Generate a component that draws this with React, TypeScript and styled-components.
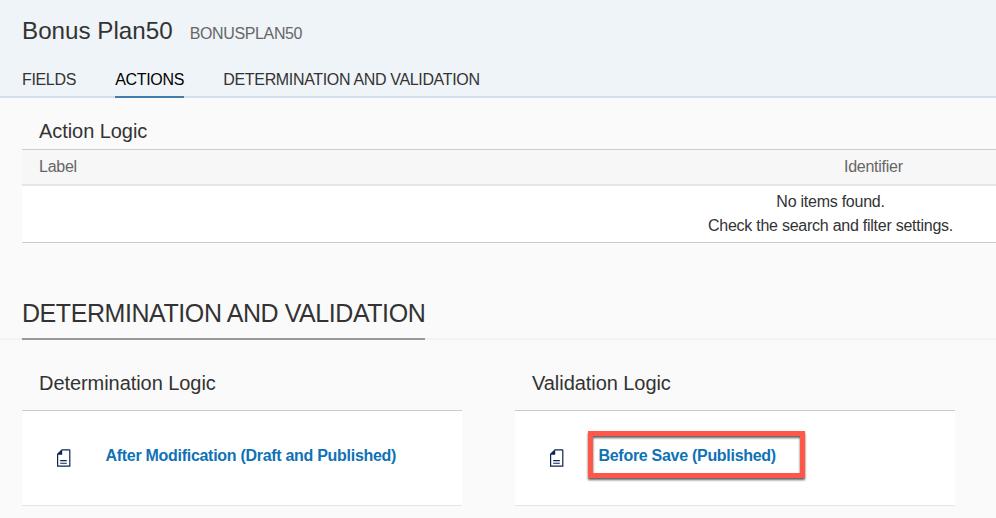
import React from 'react';
import styled, { createGlobalStyle } from 'styled-components';

const GlobalStyle = createGlobalStyle`
  * { box-sizing: border-box; }
  html, body { margin: 0; padding: 0; background: #fafafa; overflow: hidden; }
  body { font-family: "Liberation Sans", Arial, Helvetica, sans-serif; color: #333; }
`;
const Page = styled.div`width: 996px; height: 518px; overflow: hidden; background: #fafafa;`;
const Header = styled.header`height: 98px; background: #eff4f8; border-bottom: 2px solid #d1e0ee; display: flex; flex-direction: column;`;
const TitleRow = styled.div`display: flex; align-items: baseline; gap: 17px; padding: 16px 0 0 22px; height: 62px; flex: none;`;
const Title = styled.h1`margin: 0; font-size: 24.2px; line-height: 30px; font-weight: 400; color: #333; white-space: nowrap;`;
const Code = styled.span`font-size: 16px; letter-spacing: -0.36px; color: #666;`;
const Tabs = styled.nav`display: flex; gap: 39.3px; padding-left: 22px; height: 36px; flex: none;`;
const Tab = styled.a<{ $active?: boolean }>`
  height: 36px; line-height: 36px; font-size: 16px; letter-spacing: -0.34px; white-space: nowrap;
  color: ${p => (p.$active ? '#000' : '#333')};
  border-bottom: 2px solid ${p => (p.$active ? '#427cac' : 'transparent')};
`;
const PanelTitle = styled.h3<{ $lineHeight?: number }>`
  margin: 0; padding-left: 17px; height: 51px; line-height: ${p => p.$lineHeight ?? 66}px;
  font-size: 20px; letter-spacing: -0.06px; font-weight: 400; white-space: nowrap;
`;
const Section = styled.section`padding-left: 22px;`;
const Columns = styled.div`
  display: flex; height: 37px; background: #f7f7f7; border-top: 1px solid #ccc; border-bottom: 2px solid #e5e5e5;
  font-size: 16px; letter-spacing: -0.26px; line-height: 33px; color: #666;
`;
const LabelCol = styled.span`width: 822px; padding-left: 17px;`;
const Empty = styled.div`
  height: 57px; padding: 4px 0 0 643px; width: 974px; background: #fff; border-bottom: 1px solid #ccc;
  text-align: center; font-size: 16px; letter-spacing: -0.25px; line-height: 24px; white-space: nowrap;
`;
const Anchor = styled.div`display: flex; margin-top: 56px; height: 41px; padding-left: 22px; border-bottom: 2px solid #f2f2f2;`;
const AnchorText = styled.h2`margin: 0; height: 41px; line-height: 29px; font-size: 25px; letter-spacing: -0.43px; font-weight: 400; border-bottom: 2px solid #999; white-space: nowrap;`;
const Cards = styled.div`display: flex; gap: 53px; padding: 19px 0 0 22px;`;
const Card = styled.section`width: 440px;`;
const CardBody = styled.div`
  display: flex; align-items: flex-start; height: 96px; padding: 38px 0 0 34px; background: #fff;
  border-top: 1px solid #ccc; border-bottom: 1px solid #e5e5e5;
`;
const IconSvg = styled.svg`display: block; width: 16px; height: 20px; flex: none;`;
const Link = styled.a`position: relative; margin: -3px 0 0 33.5px; font-size: 16px; letter-spacing: -0.29px; line-height: 20px; font-weight: 700; color: #0f72b5; white-space: nowrap;`;
const Highlight = styled.span`
  position: absolute; left: -10.5px; top: -15px; width: 217px; height: 47px; border: 5px solid #ff574a;
  filter: drop-shadow(0 2.5px 0.8px rgba(0,0,0,.62)); pointer-events: none;
`;

const DocIcon = () => (
  <IconSvg viewBox="0 0 16 20" aria-hidden="true">
    <path d="M6 .8h7.2a.6.6 0 0 1 .6.6v15.8H1.6V5.2Z" fill="#fff" stroke="#0b2450" strokeWidth="1.2" strokeLinejoin="round" />
    <path d="M1.2 5.8 6.2.8v4.4a.6.6 0 0 1-.6.6Z" fill="#0b2450" />
    <path d="M4.2 11.6h6.6M4.2 14.3h6.6" stroke="#0b2450" strokeWidth="1.1" />
  </IconSvg>
);

export default function App() {
  return (
    <Page>
      <GlobalStyle />
      <Header>
        <TitleRow><Title>Bonus Plan50</Title><Code>BONUSPLAN50</Code></TitleRow>
        <Tabs><Tab>FIELDS</Tab><Tab $active>ACTIONS</Tab><Tab>DETERMINATION AND VALIDATION</Tab></Tabs>
      </Header>
      <Section>
        <PanelTitle>Action Logic</PanelTitle>
        <Columns><LabelCol>Label</LabelCol><span>Identifier</span></Columns>
        <Empty>No items found.<br />Check the search and filter settings.</Empty>
      </Section>
      <Anchor><AnchorText>DETERMINATION AND VALIDATION</AnchorText></Anchor>
      <Cards>
        <Card>
          <PanelTitle $lineHeight={48}>Determination Logic</PanelTitle>
          <CardBody><DocIcon /><Link>After Modification (Draft and Published)</Link></CardBody>
        </Card>
        <Card>
          <PanelTitle $lineHeight={48}>Validation Logic</PanelTitle>
          <CardBody><DocIcon /><Link>Before Save (Published)<Highlight /></Link></CardBody>
        </Card>
      </Cards>
    </Page>
  );
}
